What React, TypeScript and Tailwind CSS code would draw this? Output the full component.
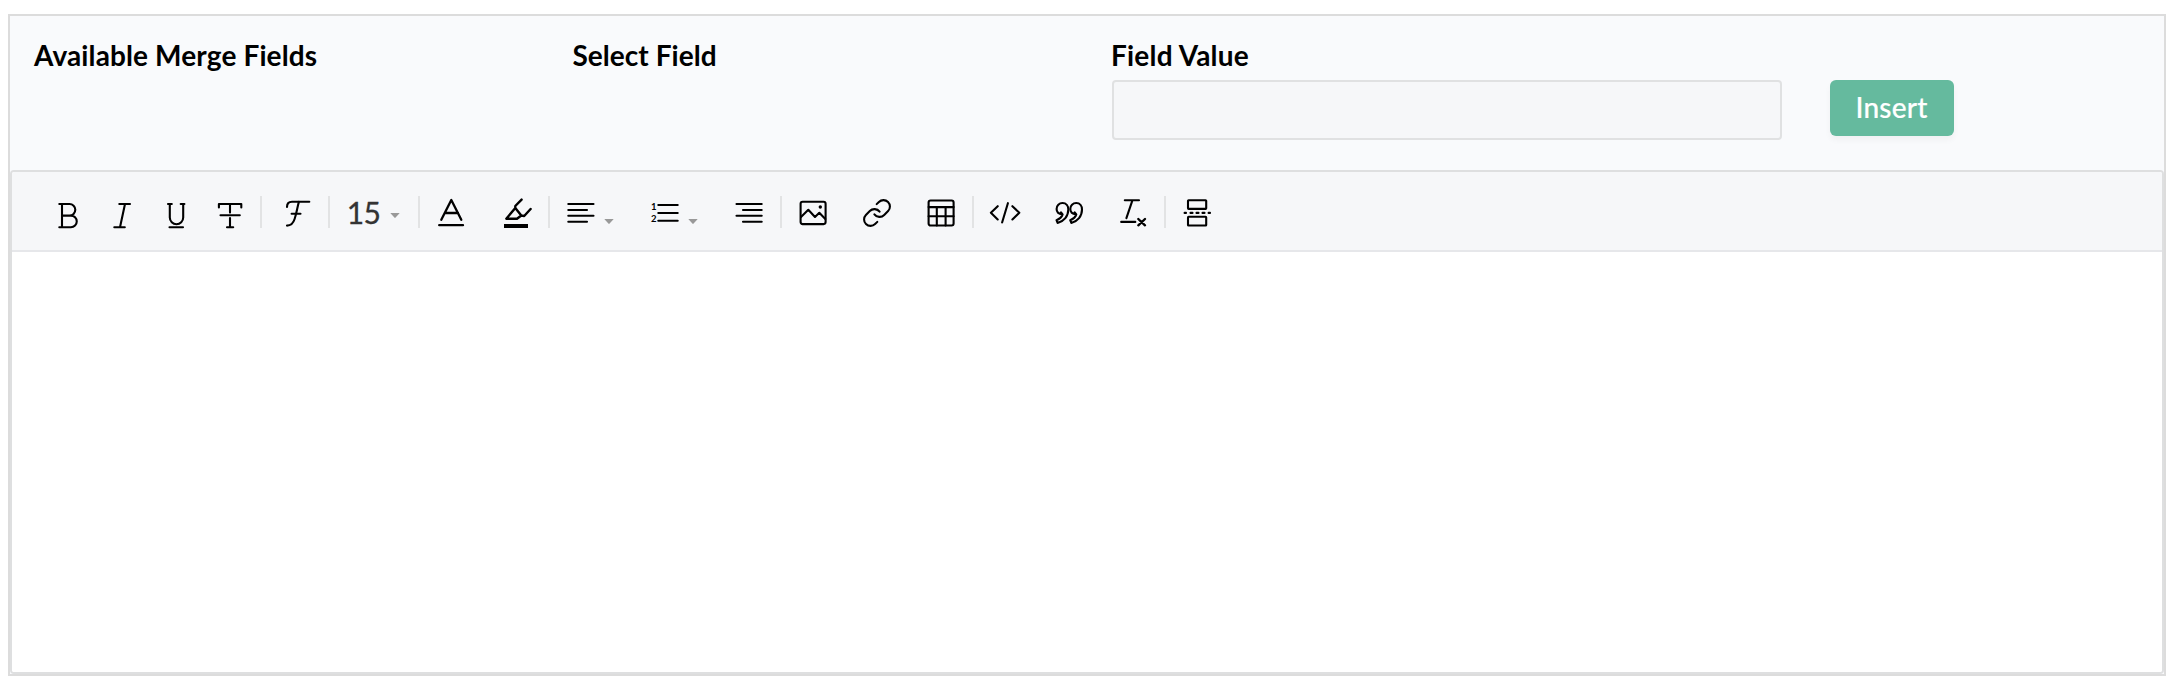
import type { ReactNode } from "react";

function Icon({ children, className = "" }: { children: ReactNode; className?: string }) {
  return (
    <button type="button" className={`shrink-0 ${className}`}>
      <svg
        width="32"
        height="36"
        viewBox="0 0 32 36"
        fill="none"
        stroke="#000"
        strokeWidth="2.1"
        strokeLinecap="round"
        strokeLinejoin="round"
        className="block"
      >
        {children}
      </svg>
    </button>
  );
}

function Divider({ className = "" }: { className?: string }) {
  return <span className={`h-8 w-0.5 shrink-0 bg-[#e2e3e4] ${className}`} />;
}

function Caret({ className = "" }: { className?: string }) {
  return (
    <svg width="10" height="6" viewBox="0 0 10 6" className={`shrink-0 ${className}`}>
      <path d="M0.3 0H9.7L5.6 4.6Q5 5.2 4.4 4.6Z" fill="#999" />
    </svg>
  );
}

const quote =
  "M9.4 20.2C5.8 19.8 3.6 17.8 3.6 14.9C3.6 11.5 6.2 9 9.5 9C13.2 9 15.3 11.8 15.3 15.6C15.3 22.2 11 27.4 4.6 28.9L3.5 26.2C6.7 24.9 8.9 22.9 9.6 20.4L8 18.4";

function Toolbar() {
  return (
    <div className="flex h-20 items-center border-b-2 border-[#e6e7ea] bg-[#f6f7f9] pt-0.5 pl-10">
      <Icon>
        <path d="M7.3 10H17.5a5.8 5.8 0 0 1 0 11.6H10M17.5 21.6H18.9a5.85 5.85 0 0 1 0 11.7H7.3M10 10V33.3" />
      </Icon>
      <Icon className="ml-[22px]">
        <path d="M13.3 10H24M19 10L14 33.3M8.3 33.3H18.8" />
      </Icon>
      <Icon className="ml-[22px]">
        <path d="M8 10H11.8M20.7 10H24.4M9.8 10V23.6a6.7 6.7 0 0 0 13.4 0V10M9.5 33.3H23" />
      </Icon>
      <Icon className="ml-[22px]">
        <path d="M4.9 13.4V10H27.3V13.4M16 10V18.6M6.5 21.3H25.8M16 24V33.3M13 33.3H19.2" />
      </Icon>
      <Divider className="ml-3.5" />
      <Icon className="ml-5">
        <path d="M5 13C5 9.6 6.6 7.7 10 7.7H27.3M17 7.7C15.4 12.5 14.6 19 12.6 25C11.2 29.5 8.6 31.6 5 31.6M9.6 19.7H18.5" />
      </Icon>
      <Divider className="ml-3.5" />
      <button type="button" className="ml-4 flex h-9 w-[54px] shrink-0 items-center">
        <span className="w-[35px] text-[30px] leading-9 tracking-[-0.6px] text-[#333] [-webkit-text-stroke:0.3px_#333]">15</span>
        <Caret className="mt-2 ml-[9px]" />
      </button>
      <Divider className="ml-[18px]" />
      <Icon className="ml-[15px]">
        <path d="M6.3 25.8L16.3 6L26.3 25.8M9.7 19H23M4.2 31.2H28" strokeWidth="2.3" />
      </Icon>
      <Icon className="ml-[34px]">
        <path
          d="M20.6 5.6L14.3 12V14L5.3 24.7H16L20.3 21.5L14.3 14M20.3 21.5L23.2 22L29.6 15"
          strokeWidth="2.4"
        />
        <path d="M3 32H27" strokeWidth="4" strokeLinecap="butt" />
      </Icon>
      <Divider className="ml-[15px]" />
      <Icon className="ml-[15px]">
        <path d="M3.3 10H28.5M3.3 16H22M3.3 21.8H28.5M3.3 27.8H22" />
      </Icon>
      <Caret className="mt-5 ml-[7px]" />
      <Icon className="ml-[35px]">
        <path d="M9.3 11H28.7M9.3 19H28.7M9.3 26.8H28.7" />
        <g fill="#000" stroke="none" fontFamily="Lato, sans-serif" fontSize="9.5" fontWeight="700">
          <text x="1.9" y="16">1</text>
          <text x="1.9" y="28.2">2</text>
        </g>
      </Icon>
      <Caret className="mt-5 ml-[7px]" />
      <Icon className="ml-[35px]">
        <path d="M3.5 10H28.7M10 16H28.7M3.5 21.8H28.7M10 27.8H28.7" />
      </Icon>
      <Divider className="ml-[15px]" />
      <Icon className="ml-[15px]">
        <rect x="3.6" y="7.7" width="25" height="22.4" rx="2" />
        <path d="M4 23L11.3 15.8L18 23L22.3 18.8L28.3 25" />
        <circle cx="23.3" cy="13" r="1.7" fill="#000" stroke="none" />
      </Icon>
      <Icon className="ml-8">
        <g transform="translate(0.4 3.4) scale(1.3)" strokeWidth="1.6">
          <path d="M10 13a5 5 0 0 0 7.54.54l3-3a5 5 0 0 0-7.07-7.07l-1.72 1.71" />
          <path d="M14 11a5 5 0 0 0-7.54-.54l-3 3a5 5 0 0 0 7.07 7.07l1.71-1.71" />
        </g>
      </Icon>
      <Icon className="ml-8">
        <rect x="3.6" y="6.5" width="25" height="25" rx="2" />
        <path d="M3.6 13.1H28.6M3.6 22.2H28.6M11.8 13.1V31.5M20.6 13.1V31.5" />
      </Icon>
      <Divider className="ml-[15px]" />
      <Icon className="ml-[15px]">
        <path d="M8.7 12.2L1.9 18.8L8.7 25.4M18.9 9.2L13.1 28.5M23.4 12.2L30.3 18.8L23.4 25.4" />
      </Icon>
      <Icon className="ml-8">
        <path d={quote} />
        <path d={quote} transform="translate(13.7 0)" />
      </Icon>
      <Icon className="ml-8">
        <path d="M7.8 6.3H22M15.4 6.3L9.4 24.2M4.2 27.9H18.3" />
        <path d="M21.3 25L28 31.3M28 25L21.3 31.3" strokeWidth="2.4" />
      </Icon>
      <Divider className="ml-[15px]" />
      <Icon className="ml-[15px]">
        <rect x="7" y="6.2" width="18.2" height="8.7" rx="0.6" />
        <rect x="7" y="22.8" width="18.2" height="8.7" rx="0.6" />
        <path d="M3.6 18.9H5M9.5 18.9H11.5M15.5 18.9H17.5M21.5 18.9H23.5M27.6 18.9H29" />
      </Icon>
    </div>
  );
}

export default function App() {
  return (
    <div className="h-[684px] w-[2176px] bg-white pt-3.5 pl-2 font-['Lato',sans-serif] text-black">
      <div className="flex h-[662px] w-[2158px] flex-col border-2 border-[#dcdcdc] bg-[#f9fafc]">
        <div className="grid h-[154px] grid-cols-[538px_539px_720px_1fr] pl-6 text-[28px] leading-[34px] font-bold">
          <div className="pt-[22px] tracking-[0.13px]">Available Merge Fields</div>
          <div className="pt-[22px] pl-[0.5px] tracking-[0.04px]">Select Field</div>
          <div className="pt-[22px]">
            <label htmlFor="field-value" className="block tracking-[0.2px]">Field Value</label>
            <input
              id="field-value"
              className="mt-2 ml-px block h-[60px] w-[670px] rounded border-2 border-[#e0e1e2] bg-[#f6f7f9] px-4 font-normal outline-none"
            />
          </div>
          <div className="pt-16">
            <button
              type="button"
              className="-ml-px block h-14 w-[124px] rounded-md bg-[#65ba9e] pr-[7px] pb-0.5 pl-1.5 text-[28px] font-medium tracking-[0.2px] text-white shadow-[0_4px_6px_rgba(0,0,0,0.04)] [-webkit-text-stroke:0.2px_white]"
            >
              Insert
            </button>
          </div>
        </div>
        <div className="flex flex-1 flex-col overflow-hidden rounded border-2 border-[#dedfe0] bg-white">
          <Toolbar />
          <div className="flex-1 bg-white" contentEditable suppressContentEditableWarning />
        </div>
      </div>
    </div>
  );
}
